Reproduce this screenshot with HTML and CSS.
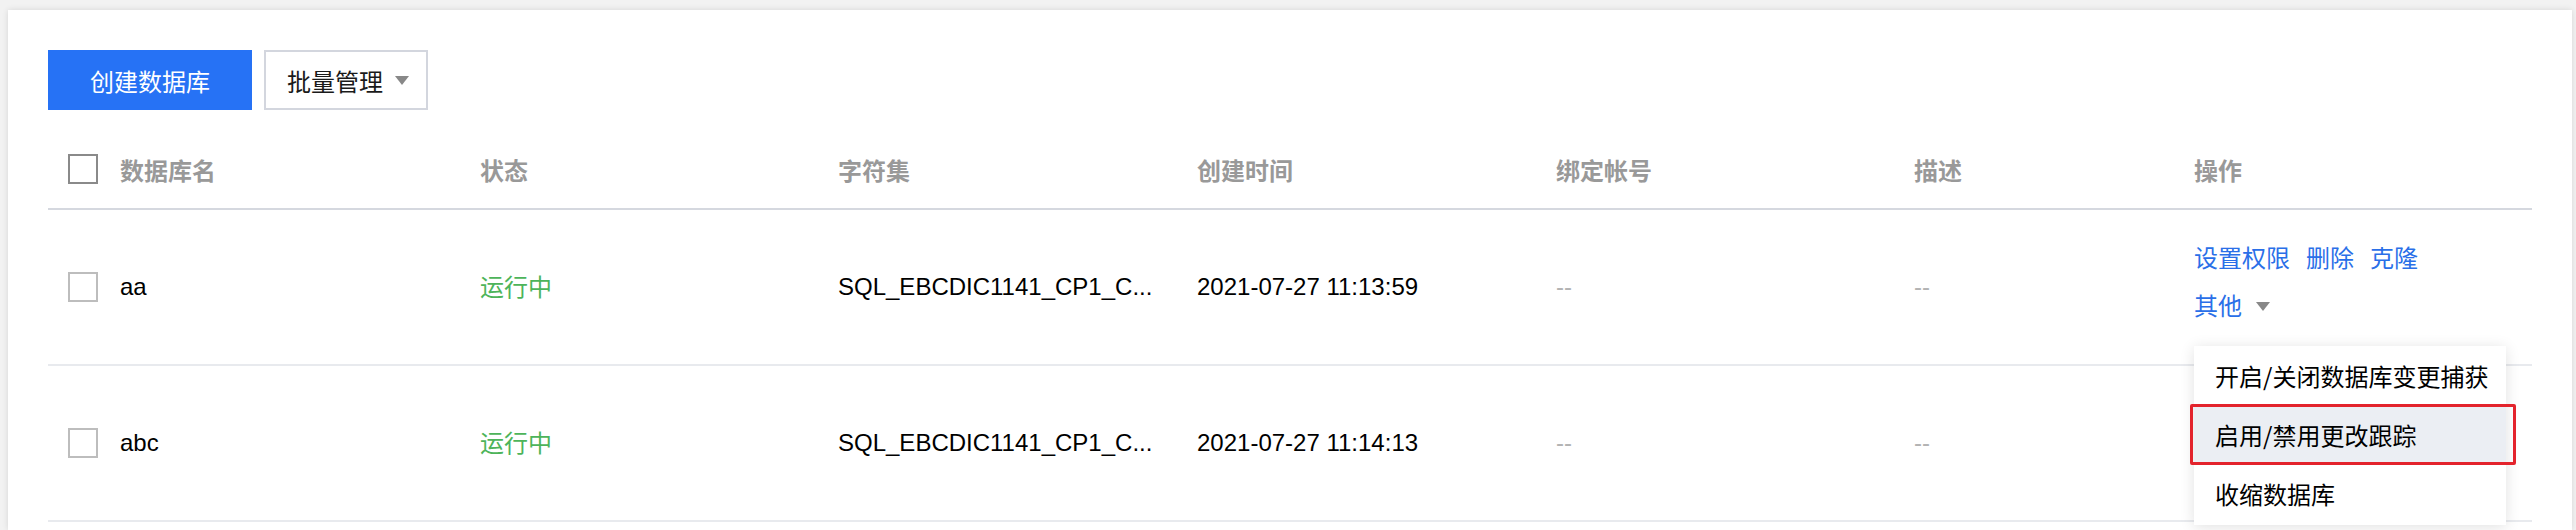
FILE: index.html
```html
<!DOCTYPE html>
<html lang="zh-CN">
<head>
  <meta charset="UTF-8" />
  <meta name="viewport" content="width=device-width, initial-scale=1.0"/>
  <title>数据库管理</title>
  <link rel="stylesheet" href="styles.css">
</head>
<body>
  <div class="panel">
    <div class="toolbar">
      <button class="btn btn-primary">创建数据库</button>
      <button class="btn btn-default">批量管理 <span class="caret"></span></button>
    </div>

    <div class="db-table">
      <div class="tr thead">
        <div class="td"><span class="checkbox dark"></span>数据库名</div>
        <div class="td">状态</div>
        <div class="td">字符集</div>
        <div class="td">创建时间</div>
        <div class="td">绑定帐号</div>
        <div class="td">描述</div>
        <div class="td">操作</div>
      </div>

      <div class="tr">
        <div class="td"><span class="checkbox"></span>aa</div>
        <div class="td status">运行中</div>
        <div class="td">SQL_EBCDIC1141_CP1_C...</div>
        <div class="td">2021-07-27 11:13:59</div>
        <div class="td empty">--</div>
        <div class="td empty">--</div>
        <div class="td ops">
          <div class="links">
            <a>设置权限</a><a>删除</a><a>克隆</a>
          </div>
          <div class="more">
            <a>其他</a><span class="caret"></span>
            <ul class="menu">
              <li>开启/关闭数据库变更捕获</li>
              <li class="active">启用/禁用更改跟踪</li>
              <li>收缩数据库</li>
            </ul>
          </div>
        </div>
      </div>

      <div class="tr">
        <div class="td"><span class="checkbox"></span>abc</div>
        <div class="td status">运行中</div>
        <div class="td">SQL_EBCDIC1141_CP1_C...</div>
        <div class="td">2021-07-27 11:14:13</div>
        <div class="td empty">--</div>
        <div class="td empty">--</div>
        <div class="td ops"></div>
      </div>
    </div>
  </div>
</body>
</html>
```

FILE: styles.css
```css
html, body {
  height: 530px;
  overflow: hidden;
}
body {
  margin: 0;
  background: #f2f2f2;
  color: #000;
  font-family: "Liberation Sans", "Noto Sans CJK SC", sans-serif;
  font-size: 24px;
}
.panel {
  box-sizing: border-box;
  margin: 10px 4px 0 8px;
  padding: 40px 40px 0;
  height: 520px;
  background: #fff;
  box-shadow: 0 0 6px rgba(0, 0, 0, 0.12);
}
.toolbar {
  display: flex;
  gap: 12px;
}
.btn {
  height: 60px;
  font-family: "Noto Sans CJK SC", sans-serif;
  font-size: 24px;
  font-weight: normal;
  border: none;
  cursor: pointer;
  display: flex;
  align-items: center;
}
.btn-primary {
  width: 204px;
  justify-content: center;
  background: #2672f5;
  color: #fff;
}
.btn-default {
  width: 164px;
  padding: 0 0 0 21px;
  background: #fff;
  border: 2px solid #d3d6de;
  color: #1a1a1a;
}
.caret {
  display: inline-block;
  width: 0;
  height: 0;
  border-left: 7px solid transparent;
  border-right: 7px solid transparent;
  border-top: 9px solid #888;
}
.btn-default .caret {
  margin-left: 12px;
}
.db-table {
  margin-top: 20px;
}
.tr {
  display: grid;
  grid-template-columns: 412px 358px 359px 359px 358px 280px 358px;
  height: 154px;
  border-bottom: 2px solid #e8eaee;
}
.thead {
  height: 78px;
  border-bottom-color: #d5d8df;
  color: #999;
  font-family: "Noto Sans CJK SC", sans-serif;
  font-weight: bold;
}
.td {
  display: flex;
  align-items: center;
  padding: 0 20px;
  white-space: nowrap;
}
.checkbox {
  width: 26px;
  height: 26px;
  border: 2px solid #bdbdbd;
  margin-right: 22px;
  flex: none;
}
.checkbox.dark {
  border-color: #8a8a8a;
}
.status {
  color: #4db45a;
  font-family: "Noto Sans CJK SC", sans-serif;
  padding-bottom: 4px;
}
.empty {
  color: #b3b3b3;
}
.ops {
  flex-direction: column;
  align-items: flex-start;
  justify-content: center;
  padding-bottom: 12px;
  line-height: 48px;
  font-family: "Noto Sans CJK SC", sans-serif;
}
.ops a {
  color: #2a6fe8;
  cursor: pointer;
}
.links a {
  margin-right: 16px;
}
.more {
  position: relative;
  display: flex;
  align-items: center;
}
.more .caret {
  margin-left: 14px;
  margin-top: 2px;
}
.menu {
  position: absolute;
  top: calc(100% + 17px);
  left: 0;
  width: 312px;
  margin: 0;
  padding: 0 0 2px;
  list-style: none;
  background: #fff;
  box-shadow: 0 2px 14px rgba(0, 0, 0, 0.12);
  z-index: 2;
}
.menu li {
  height: 59px;
  line-height: 59px;
  padding: 0 21px;
  color: #000;
}
.menu li.active {
  position: relative;
  background: #ebeef3;
}
.menu li.active::after {
  content: "";
  position: absolute;
  top: -1px;
  left: -4px;
  right: -10px;
  bottom: -1px;
  border: 3px solid #e3232c;
  border-radius: 2px;
}
```
